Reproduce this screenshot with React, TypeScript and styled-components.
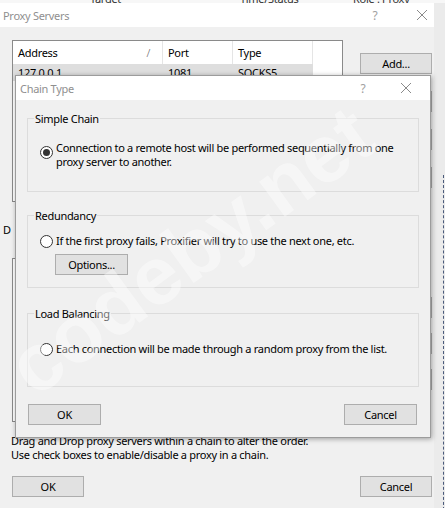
import React from "react";
import styled, { createGlobalStyle } from "styled-components";

const FONT = `"Noto Sans", "Open Sans", sans-serif`;

const GlobalStyle = createGlobalStyle`
  html, body { margin: 0; padding: 0; background: #f0f0f0; }
  body { font-family: ${FONT}; font-size: 11px; letter-spacing: -0.3px; color: #000; }
  * { box-sizing: border-box; }
`;

const Page = styled.div`
  position: relative;
  width: 445px;
  height: 508px;
  overflow: hidden;
  background: #ececec;
  display: flex;
  flex-direction: column;
`;

const BehindHeader = styled.div`
  height: 3px;
  flex: none;
  overflow: hidden;
  background: #f7f7f7;
  position: relative;
`;

const BehindLabel = styled.span<{ $x: number }>`
  position: absolute;
  left: ${(p) => p.$x}px;
  bottom: -2px;
  line-height: 12px;
  color: #333;
`;

const Main = styled.div`
  flex: 1;
  display: flex;
  min-height: 0;
`;

const Window = styled.div`
  width: 434px;
  flex: none;
  background: #f0f0f0;
  display: flex;
  flex-direction: column;
`;

const TitleBar = styled.div`
  height: 24px;
  flex: none;
  background: #fff;
  display: grid;
  grid-template-columns: 1fr 14px 16px;
  column-gap: 32px;
  align-items: center;
  padding: 0 4px 0 3px;
  color: #8f8f8f;
`;

const DialogTitleBar = styled(TitleBar)`
  padding: 0 16px 0 4px;
  column-gap: 28px;
`;

const TitleText = styled.span`
  line-height: 15px;
`;

const HelpGlyph = styled.span`
  text-align: center;
  color: #a0a0a0;
  font-size: 12px;
  line-height: 15px;
`;

const CloseIcon = () => (
  <svg width="16" height="12" viewBox="0 0 16 12">
    <path d="M3 1 L13 11 M13 1 L3 11" stroke="#8a8a8a" strokeWidth="1" fill="none" />
  </svg>
);

const Body = styled.div`
  flex: 1;
  display: flex;
  flex-direction: column;
  padding: 13px 2px 0 12px;
`;

const TopGrid = styled.div`
  display: grid;
  grid-template-columns: 331px 72px;
  column-gap: 17px;
`;

const LeftCol = styled.div`
  display: flex;
  flex-direction: column;
`;

const ListBox = styled.div<{ $h: number; $gap?: number }>`
  width: 331px;
  height: ${(p) => p.$h}px;
  margin-top: ${(p) => p.$gap ?? 0}px;
  background: #fff;
  border: 1px solid #8a8a8a;
  overflow: hidden;
`;

const ListRow = styled.div<{ $header?: boolean; $selected?: boolean }>`
  display: grid;
  grid-template-columns: 150px 70px 80px;
  width: 300px;
  height: ${(p) => (p.$header ? 23 : 17)}px;
  background: ${(p) => (p.$selected ? "#dedede" : "#fff")};
`;

const Cell = styled.div<{ $header?: boolean }>`
  display: flex;
  align-items: center;
  justify-content: space-between;
  padding: 0 12px 0 5px;
  border-right: ${(p) => (p.$header ? "1px solid #e5e5e5" : "none")};
  line-height: 15px;
`;

const SortMark = styled.span`
  color: #666;
  font-weight: 300;
`;

const SideLabel = styled.div`
  margin: 20px 0 0 -9px;
  line-height: 15px;
  height: 15px;
`;

const ButtonStack = styled.div<{ $top: number; $gap: number }>`
  display: flex;
  flex-direction: column;
  gap: ${(p) => p.$gap}px;
  margin-top: ${(p) => p.$top}px;
`;

const RightCol = styled.div`
  display: flex;
  flex-direction: column;
`;

const Button = styled.button<{ $w?: number }>`
  width: ${(p) => p.$w ?? 72}px;
  height: 21px;
  padding: 0;
  margin: 0;
  background: #e1e1e1;
  border: 1px solid #adadad;
  font: inherit;
  letter-spacing: inherit;
  color: #000;
  display: flex;
  align-items: center;
  justify-content: center;
  line-height: 15px;
`;

const Hint = styled.div`
  margin: 12px 0 0 -1px;
  line-height: 14px;
`;

const ButtonRow = styled.div<{ $top: number }>`
  display: flex;
  justify-content: space-between;
  margin-top: ${(p) => p.$top}px;
`;

const Sliver = styled.div`
  flex: 1;
  background: #ebebeb;
  display: flex;
  justify-content: flex-end;
  padding-right: 1px;
`;

const DottedLine = styled.div`
  margin-top: 172px;
  border-left: 1px dashed #4a5a7a;
  height: 340px;
`;

const Dialog = styled.div`
  position: absolute;
  left: 15px;
  top: 75px;
  width: 416px;
  height: 363px;
  background: #f0f0f0;
  border: 1px solid #9c9c9c;
  box-shadow: 1px 1px 5px rgba(0, 0, 0, 0.35);
  display: flex;
  flex-direction: column;
`;

const DialogBody = styled.div`
  flex: 1;
  display: flex;
  flex-direction: column;
  padding: 11px 11px 12px 11px;
`;

const Group = styled.fieldset<{ $h: number; $top: number; $pt: number }>`
  margin: ${(p) => p.$top}px 0 0 0;
  height: ${(p) => p.$h}px;
  border: 1px solid #dcdcdc;
  padding: ${(p) => p.$pt}px 12px 0 12px;
  min-width: 0;
  display: flex;
  flex-direction: column;
  align-items: flex-start;
`;

const Legend = styled.legend`
  margin-left: -6px;
  padding: 0 1px;
  line-height: 15px;
`;

const RadioRow = styled.label`
  display: flex;
  align-items: flex-start;
  gap: 3px;
  line-height: 14px;
  white-space: nowrap;
`;

const RadioCircle = styled.span<{ $checked?: boolean }>`
  flex: none;
  width: 13px;
  height: 13px;
  margin-top: ${(p) => (p.$checked ? 5 : 1)}px;
  border-radius: 50%;
  border: 1px solid #333;
  background: #fff;
  display: flex;
  align-items: center;
  justify-content: center;
  &::after {
    content: "";
    width: 7px;
    height: 7px;
    border-radius: 50%;
    background: ${(p) => (p.$checked ? "#333" : "transparent")};
  }
`;

const OptionsButton = styled(Button)`
  margin: 6px 0 0 15px;
`;

const DialogButtons = styled.div`
  display: flex;
  justify-content: space-between;
  margin-top: 17px;
  padding: 0 2px 0 1px;
`;

const Watermark = styled.div`
  position: absolute;
  left: 18px;
  top: 336px;
  font-family: "Liberation Sans", Arial, sans-serif;
  font-weight: 700;
  font-size: 82px;
  line-height: 80px;
  letter-spacing: 0;
  color: rgba(255, 255, 255, 0.42);
  transform: rotate(-36deg);
  transform-origin: 0 50%;
  white-space: nowrap;
  pointer-events: none;
`;

export default function App() {
  return (
    <>
      <GlobalStyle />
      <Page>
        <BehindHeader>
          <BehindLabel $x={90}>Target</BehindLabel>
          <BehindLabel $x={240}>Time/Status</BehindLabel>
          <BehindLabel $x={353}>Role : Proxy</BehindLabel>
        </BehindHeader>
        <Main>
          <Window>
            <TitleBar>
              <TitleText>Proxy Servers</TitleText>
              <HelpGlyph>?</HelpGlyph>
              <CloseIcon />
            </TitleBar>
            <Body>
              <TopGrid>
                <LeftCol>
                  <ListBox $h={162}>
                    <ListRow $header>
                      <Cell $header>
                        Address<SortMark>/</SortMark>
                      </Cell>
                      <Cell $header>Port</Cell>
                      <Cell $header>Type</Cell>
                    </ListRow>
                    <ListRow $selected>
                      <Cell>127.0.0.1</Cell>
                      <Cell>1081</Cell>
                      <Cell>SOCKS5</Cell>
                    </ListRow>
                  </ListBox>
                  <SideLabel>D</SideLabel>
                  <ListBox $h={164} $gap={21} />
                </LeftCol>
                <RightCol>
                  <ButtonStack $top={13} $gap={17}>
                    <Button>Add...</Button>
                    <Button>Edit...</Button>
                    <Button>Remove</Button>
                    <Button>Check</Button>
                  </ButtonStack>
                  <ButtonStack $top={109} $gap={15}>
                    <Button>Create</Button>
                    <Button>Rename</Button>
                    <Button>Delete</Button>
                  </ButtonStack>
                </RightCol>
              </TopGrid>
              <Hint>
                Drag and Drop proxy servers within a chain to alter the order.
                <br />
                Use check boxes to enable/disable a proxy in a chain.
              </Hint>
              <ButtonRow $top={14}>
                <Button>OK</Button>
                <Button>Cancel</Button>
              </ButtonRow>
            </Body>
          </Window>
          <Sliver>
            <DottedLine />
          </Sliver>
        </Main>

        <Dialog>
          <DialogTitleBar>
            <TitleText>Chain Type</TitleText>
            <HelpGlyph>?</HelpGlyph>
            <CloseIcon />
          </DialogTitleBar>
          <DialogBody>
            <Group $h={81} $top={0} $pt={15}>
              <Legend>Simple Chain</Legend>
              <RadioRow>
                <RadioCircle $checked />
                <span>
                  Connection to a remote host will be performed sequentially from one
                  <br />
                  proxy server to another.
                </span>
              </RadioRow>
            </Group>
            <Group $h={80} $top={16} $pt={11}>
              <Legend>Redundancy</Legend>
              <RadioRow>
                <RadioCircle />
                <span>If the first proxy fails, Proxifier will try to use the next one, etc.</span>
              </RadioRow>
              <OptionsButton $w={73}>Options...</OptionsButton>
            </Group>
            <Group $h={81} $top={18} $pt={21}>
              <Legend>Load Balancing</Legend>
              <RadioRow>
                <RadioCircle />
                <span>Each connection will be made through a random proxy from the list.</span>
              </RadioRow>
            </Group>
            <DialogButtons>
              <Button $w={73}>OK</Button>
              <Button $w={73}>Cancel</Button>
            </DialogButtons>
          </DialogBody>
        </Dialog>

        <Watermark>codeby.net</Watermark>
      </Page>
    </>
  );
}
